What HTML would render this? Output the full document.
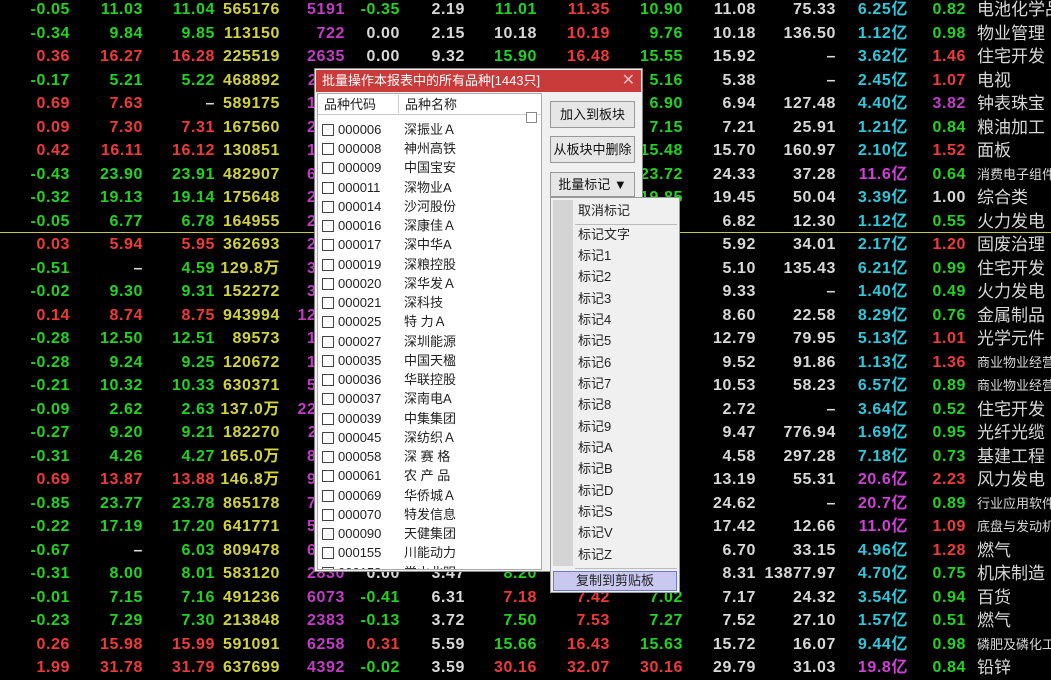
<!DOCTYPE html>
<html><head><meta charset="utf-8"><style>
*{margin:0;padding:0;box-sizing:border-box}
body{width:1051px;height:679px;background:#000;overflow:hidden;position:relative;font-family:"Liberation Sans","Noto Sans CJK SC",sans-serif}
.t{position:absolute;left:0;top:-1.75px;width:1051px}
.r{position:relative;height:23.5px;line-height:23.5px;font-size:16px;font-weight:bold;letter-spacing:0.6px}
.r span{position:absolute;top:0;text-align:right;white-space:nowrap}
.a{left:0;width:70px}.b{left:70px;width:73px}.c{left:143px;width:72px}.d{left:215px;width:65px}
.e{left:280px;width:65px}.f{left:345px;width:55px}.h{left:400px;width:65px}.i{left:465px;width:72px}
.j{left:537px;width:73px}.k{left:610px;width:73px}.l{left:683px;width:73px}.m{left:756px;width:80px}
.n{left:836px;width:72px}.o{left:908px;width:58px}
.r span.nm{left:977px;text-align:left;font-weight:normal;font-size:17px;color:#d8d8d8;letter-spacing:0}
.r span.sm{font-size:13px}
.g{color:#22d322}.rd{color:#f03a3a}.w{color:#d8d8d8}.y{color:#d2d23c}.p{color:#c23cc8}.cy{color:#2ec8dc}.mg{color:#d040d8}
.yl{position:absolute;left:0;top:232px;width:1051px;height:1px;background:#c8c83c}
.dlg{position:absolute;left:314px;top:68px;width:329px;height:504px;background:#f0f0f0;border:1px solid #888}
.tb{position:absolute;left:1px;top:1px;width:325px;height:22px;background:#c93a3a;color:#fff;font-size:13px;line-height:22px;padding-left:6px}
.tb i{position:absolute;right:6px;top:0;font-style:normal;font-size:16px;color:#f2c0c0}
.lst{position:absolute;left:2px;top:24px;width:225px;height:477px;background:#fff;border:1px solid #aaa;overflow:hidden;font-size:13px;color:#222}
.hd{height:21px;line-height:21px;background:#fff;border-bottom:1px solid #ddd;position:relative}
.hd span{position:absolute;top:0}
.it{position:absolute;left:4px;height:19px;line-height:19px}
.cb{display:inline-block;width:12px;height:12px;border:1px solid #444;vertical-align:-2px;margin-right:4px;background:#fff}
.it b{font-weight:normal;position:absolute;left:82px;top:0;white-space:nowrap}
.btn{position:absolute;left:235px;width:85px;height:27px;border:1px solid #999;background:#e6e6e6;font-size:13px;text-align:center;line-height:25px;color:#111}
.menu{position:absolute;left:550px;top:197px;width:130px;height:396px;background:#f0f0f0;border:1px solid #999;font-size:13px;color:#222}
.strip{position:absolute;left:2px;top:2px;width:20px;height:366px;background:#d4d4d4}
.mi{position:absolute;left:27px;height:20px;line-height:20px}
.sep{position:absolute;left:24px;width:102px;height:1px;background:#bbb}
.cp{position:absolute;left:2px;top:373px;width:124px;height:20px;background:#c8c8f0;border:1px solid #6a7ad0;text-align:center;line-height:18px}
</style></head><body>
<div class="t">
<div class="r"><span class="a g">-0.05</span><span class="b g">11.03</span><span class="c g">11.04</span><span class="d y">565176</span><span class="e p">5191</span><span class="f g">-0.35</span><span class="h w">2.19</span><span class="i g">11.01</span><span class="j rd">11.35</span><span class="k g">10.90</span><span class="l w">11.08</span><span class="m w">75.33</span><span class="n cy">6.25亿</span><span class="o g">0.82</span><span class="nm">电池化学品</span></div>
<div class="r"><span class="a g">-0.34</span><span class="b g">9.84</span><span class="c g">9.85</span><span class="d y">113150</span><span class="e p">722</span><span class="f w">0.00</span><span class="h w">2.15</span><span class="i w">10.18</span><span class="j rd">10.19</span><span class="k g">9.76</span><span class="l w">10.18</span><span class="m w">136.50</span><span class="n cy">1.12亿</span><span class="o g">0.98</span><span class="nm">物业管理</span></div>
<div class="r"><span class="a rd">0.36</span><span class="b rd">16.27</span><span class="c rd">16.28</span><span class="d y">225519</span><span class="e p">2635</span><span class="f w">0.00</span><span class="h w">9.32</span><span class="i g">15.90</span><span class="j rd">16.48</span><span class="k g">15.55</span><span class="l w">15.92</span><span class="m w">–</span><span class="n cy">3.62亿</span><span class="o rd">1.46</span><span class="nm">住宅开发</span></div>
<div class="r"><span class="a g">-0.17</span><span class="b g">5.21</span><span class="c g">5.22</span><span class="d y">468892</span><span class="e p">2113</span><span class="k g">5.16</span><span class="l w">5.38</span><span class="m w">–</span><span class="n cy">2.45亿</span><span class="o rd">1.07</span><span class="nm">电视</span></div>
<div class="r"><span class="a rd">0.69</span><span class="b rd">7.63</span><span class="c w">–</span><span class="d y">589175</span><span class="e p">1320</span><span class="k g">6.90</span><span class="l w">6.94</span><span class="m w">127.48</span><span class="n cy">4.40亿</span><span class="o p">3.82</span><span class="nm">钟表珠宝</span></div>
<div class="r"><span class="a rd">0.09</span><span class="b rd">7.30</span><span class="c rd">7.31</span><span class="d y">167560</span><span class="e p">2240</span><span class="k g">7.15</span><span class="l w">7.21</span><span class="m w">25.91</span><span class="n cy">1.21亿</span><span class="o g">0.84</span><span class="nm">粮油加工</span></div>
<div class="r"><span class="a rd">0.42</span><span class="b rd">16.11</span><span class="c rd">16.12</span><span class="d y">130851</span><span class="e p">1780</span><span class="k g">15.48</span><span class="l w">15.70</span><span class="m w">160.97</span><span class="n cy">2.10亿</span><span class="o rd">1.52</span><span class="nm">面板</span></div>
<div class="r"><span class="a g">-0.43</span><span class="b g">23.90</span><span class="c g">23.91</span><span class="d y">482907</span><span class="e p">6120</span><span class="k g">23.72</span><span class="l w">24.33</span><span class="m w">37.28</span><span class="n mg">11.6亿</span><span class="o g">0.64</span><span class="nm sm">消费电子组件</span></div>
<div class="r"><span class="a g">-0.32</span><span class="b g">19.13</span><span class="c g">19.14</span><span class="d y">175648</span><span class="e p">2250</span><span class="k g">19.85</span><span class="l w">19.45</span><span class="m w">50.04</span><span class="n cy">3.39亿</span><span class="o w">1.00</span><span class="nm">综合类</span></div>
<div class="r"><span class="a g">-0.05</span><span class="b g">6.77</span><span class="c g">6.78</span><span class="d y">164955</span><span class="e p">2012</span><span class="l w">6.82</span><span class="m w">12.30</span><span class="n cy">1.12亿</span><span class="o g">0.55</span><span class="nm">火力发电</span></div>
<div class="r"><span class="a rd">0.03</span><span class="b rd">5.94</span><span class="c rd">5.95</span><span class="d y">362693</span><span class="e p">2410</span><span class="l w">5.92</span><span class="m w">34.01</span><span class="n cy">2.17亿</span><span class="o rd">1.20</span><span class="nm">固废治理</span></div>
<div class="r"><span class="a g">-0.51</span><span class="b w">–</span><span class="c g">4.59</span><span class="d y">129.8万</span><span class="e p">3120</span><span class="l w">5.10</span><span class="m w">135.43</span><span class="n cy">6.21亿</span><span class="o g">0.99</span><span class="nm">住宅开发</span></div>
<div class="r"><span class="a g">-0.02</span><span class="b g">9.30</span><span class="c g">9.31</span><span class="d y">152272</span><span class="e p">3010</span><span class="l w">9.33</span><span class="m w">–</span><span class="n cy">1.40亿</span><span class="o g">0.49</span><span class="nm">火力发电</span></div>
<div class="r"><span class="a rd">0.14</span><span class="b rd">8.74</span><span class="c rd">8.75</span><span class="d y">943994</span><span class="e p">12010</span><span class="l w">8.60</span><span class="m w">22.58</span><span class="n cy">8.29亿</span><span class="o g">0.76</span><span class="nm">金属制品</span></div>
<div class="r"><span class="a g">-0.28</span><span class="b g">12.50</span><span class="c g">12.51</span><span class="d y">89573</span><span class="e p">1410</span><span class="l w">12.79</span><span class="m w">79.95</span><span class="n cy">5.13亿</span><span class="o rd">1.01</span><span class="nm">光学元件</span></div>
<div class="r"><span class="a g">-0.28</span><span class="b g">9.24</span><span class="c g">9.25</span><span class="d y">120672</span><span class="e p">1810</span><span class="l w">9.52</span><span class="m w">91.86</span><span class="n cy">1.13亿</span><span class="o rd">1.36</span><span class="nm sm">商业物业经营</span></div>
<div class="r"><span class="a g">-0.21</span><span class="b g">10.32</span><span class="c g">10.33</span><span class="d y">630371</span><span class="e p">5410</span><span class="l w">10.53</span><span class="m w">58.23</span><span class="n cy">6.57亿</span><span class="o g">0.89</span><span class="nm sm">商业物业经营</span></div>
<div class="r"><span class="a g">-0.09</span><span class="b g">2.62</span><span class="c g">2.63</span><span class="d y">137.0万</span><span class="e p">22310</span><span class="l w">2.72</span><span class="m w">–</span><span class="n cy">3.64亿</span><span class="o g">0.52</span><span class="nm">住宅开发</span></div>
<div class="r"><span class="a g">-0.27</span><span class="b g">9.20</span><span class="c g">9.21</span><span class="d y">182270</span><span class="e p">2110</span><span class="l w">9.47</span><span class="m w">776.94</span><span class="n cy">1.69亿</span><span class="o g">0.95</span><span class="nm">光纤光缆</span></div>
<div class="r"><span class="a g">-0.31</span><span class="b g">4.26</span><span class="c g">4.27</span><span class="d y">165.0万</span><span class="e p">8120</span><span class="l w">4.58</span><span class="m w">297.28</span><span class="n cy">7.18亿</span><span class="o g">0.73</span><span class="nm">基建工程</span></div>
<div class="r"><span class="a rd">0.69</span><span class="b rd">13.87</span><span class="c rd">13.88</span><span class="d y">146.8万</span><span class="e p">9810</span><span class="l w">13.19</span><span class="m w">55.31</span><span class="n mg">20.6亿</span><span class="o rd">2.23</span><span class="nm">风力发电</span></div>
<div class="r"><span class="a g">-0.85</span><span class="b g">23.77</span><span class="c g">23.78</span><span class="d y">865178</span><span class="e p">7210</span><span class="l w">24.62</span><span class="m w">–</span><span class="n mg">20.7亿</span><span class="o g">0.89</span><span class="nm sm">行业应用软件</span></div>
<div class="r"><span class="a g">-0.22</span><span class="b g">17.19</span><span class="c g">17.20</span><span class="d y">641771</span><span class="e p">5210</span><span class="l w">17.42</span><span class="m w">12.66</span><span class="n mg">11.0亿</span><span class="o rd">1.09</span><span class="nm sm">底盘与发动机</span></div>
<div class="r"><span class="a g">-0.67</span><span class="b w">–</span><span class="c g">6.03</span><span class="d y">809478</span><span class="e p">6010</span><span class="l w">6.70</span><span class="m w">33.15</span><span class="n cy">4.96亿</span><span class="o rd">1.28</span><span class="nm">燃气</span></div>
<div class="r"><span class="a g">-0.31</span><span class="b g">8.00</span><span class="c g">8.01</span><span class="d y">583120</span><span class="e p">2830</span><span class="f w">0.00</span><span class="h w">3.47</span><span class="i g">8.20</span><span class="l w">8.31</span><span class="m w">13877.97</span><span class="n cy">4.70亿</span><span class="o g">0.75</span><span class="nm">机床制造</span></div>
<div class="r"><span class="a g">-0.01</span><span class="b g">7.15</span><span class="c g">7.16</span><span class="d y">491236</span><span class="e p">6073</span><span class="f g">-0.41</span><span class="h w">6.31</span><span class="i rd">7.18</span><span class="j rd">7.42</span><span class="k g">7.02</span><span class="l w">7.17</span><span class="m w">24.32</span><span class="n cy">3.54亿</span><span class="o g">0.94</span><span class="nm">百货</span></div>
<div class="r"><span class="a g">-0.23</span><span class="b g">7.29</span><span class="c g">7.30</span><span class="d y">213848</span><span class="e p">2383</span><span class="f g">-0.13</span><span class="h w">3.72</span><span class="i g">7.50</span><span class="j rd">7.53</span><span class="k g">7.27</span><span class="l w">7.52</span><span class="m w">27.10</span><span class="n cy">1.57亿</span><span class="o g">0.51</span><span class="nm">燃气</span></div>
<div class="r"><span class="a rd">0.26</span><span class="b rd">15.98</span><span class="c rd">15.99</span><span class="d y">591091</span><span class="e p">6258</span><span class="f rd">0.31</span><span class="h w">5.59</span><span class="i g">15.66</span><span class="j rd">16.43</span><span class="k g">15.63</span><span class="l w">15.72</span><span class="m w">16.07</span><span class="n cy">9.44亿</span><span class="o g">0.98</span><span class="nm sm">磷肥及磷化工</span></div>
<div class="r"><span class="a rd">1.99</span><span class="b rd">31.78</span><span class="c rd">31.79</span><span class="d y">637699</span><span class="e p">4392</span><span class="f g">-0.02</span><span class="h w">3.59</span><span class="i rd">30.16</span><span class="j rd">32.07</span><span class="k rd">30.16</span><span class="l w">29.79</span><span class="m w">31.03</span><span class="n mg">19.8亿</span><span class="o g">0.84</span><span class="nm">铅锌</span></div>
</div>
<div class="yl"></div>

<div class="dlg">
<div class="tb">批量操作本报表中的所有品种[1443只]<i>✕</i></div>
<div class="lst">
<div class="hd"><span style="left:6px">品种代码</span><span style="left:80px;top:1px;height:18px;border-left:1px solid #ccc"></span><span style="left:87px">品种名称</span><span style="left:0;top:20px;width:210px;border-top:1px solid #ccc"></span></div>
<div class="it" style="top:26px"><span class="cb"></span>000006<b>深振业Ａ</b></div>
<div class="it" style="top:45px"><span class="cb"></span>000008<b>神州高铁</b></div>
<div class="it" style="top:64px"><span class="cb"></span>000009<b>中国宝安</b></div>
<div class="it" style="top:84px"><span class="cb"></span>000011<b>深物业A</b></div>
<div class="it" style="top:103px"><span class="cb"></span>000014<b>沙河股份</b></div>
<div class="it" style="top:122px"><span class="cb"></span>000016<b>深康佳Ａ</b></div>
<div class="it" style="top:141px"><span class="cb"></span>000017<b>深中华A</b></div>
<div class="it" style="top:161px"><span class="cb"></span>000019<b>深粮控股</b></div>
<div class="it" style="top:180px"><span class="cb"></span>000020<b>深华发Ａ</b></div>
<div class="it" style="top:199px"><span class="cb"></span>000021<b>深科技</b></div>
<div class="it" style="top:218px"><span class="cb"></span>000025<b>特 力Ａ</b></div>
<div class="it" style="top:238px"><span class="cb"></span>000027<b>深圳能源</b></div>
<div class="it" style="top:257px"><span class="cb"></span>000035<b>中国天楹</b></div>
<div class="it" style="top:276px"><span class="cb"></span>000036<b>华联控股</b></div>
<div class="it" style="top:295px"><span class="cb"></span>000037<b>深南电A</b></div>
<div class="it" style="top:315px"><span class="cb"></span>000039<b>中集集团</b></div>
<div class="it" style="top:334px"><span class="cb"></span>000045<b>深纺织Ａ</b></div>
<div class="it" style="top:353px"><span class="cb"></span>000058<b>深 赛 格</b></div>
<div class="it" style="top:372px"><span class="cb"></span>000061<b>农 产 品</b></div>
<div class="it" style="top:392px"><span class="cb"></span>000069<b>华侨城Ａ</b></div>
<div class="it" style="top:411px"><span class="cb"></span>000070<b>特发信息</b></div>
<div class="it" style="top:430px"><span class="cb"></span>000090<b>天健集团</b></div>
<div class="it" style="top:449px"><span class="cb"></span>000155<b>川能动力</b></div>
<div class="it" style="top:469px"><span class="cb"></span>000158<b>常山北明</b></div>
</div>
<div style="position:absolute;left:211px;top:43px;width:11px;height:11px;border:1px solid #888;background:#fff"></div>
<div class="btn" style="top:32px">加入到板块</div>
<div class="btn" style="top:67px">从板块中删除</div>
<div class="btn" style="top:103px;height:25px;line-height:23px">批量标记 ▼</div>
</div>

<div class="menu">
<div class="strip"></div>
<div class="mi" style="top:3px">取消标记</div>
<div class="sep" style="top:26px"></div>
<div class="mi" style="top:27px">标记文字</div>
<div class="mi" style="top:48px">标记1</div>
<div class="mi" style="top:69px">标记2</div>
<div class="mi" style="top:91px">标记3</div>
<div class="mi" style="top:112px">标记4</div>
<div class="mi" style="top:133px">标记5</div>
<div class="mi" style="top:155px">标记6</div>
<div class="mi" style="top:176px">标记7</div>
<div class="mi" style="top:197px">标记8</div>
<div class="mi" style="top:219px">标记9</div>
<div class="mi" style="top:240px">标记A</div>
<div class="mi" style="top:261px">标记B</div>
<div class="mi" style="top:283px">标记D</div>
<div class="mi" style="top:304px">标记S</div>
<div class="mi" style="top:325px">标记V</div>
<div class="mi" style="top:347px">标记Z</div>
<div class="sep" style="top:370px"></div>
<div class="cp">复制到剪贴板</div>
</div>
</body></html>
